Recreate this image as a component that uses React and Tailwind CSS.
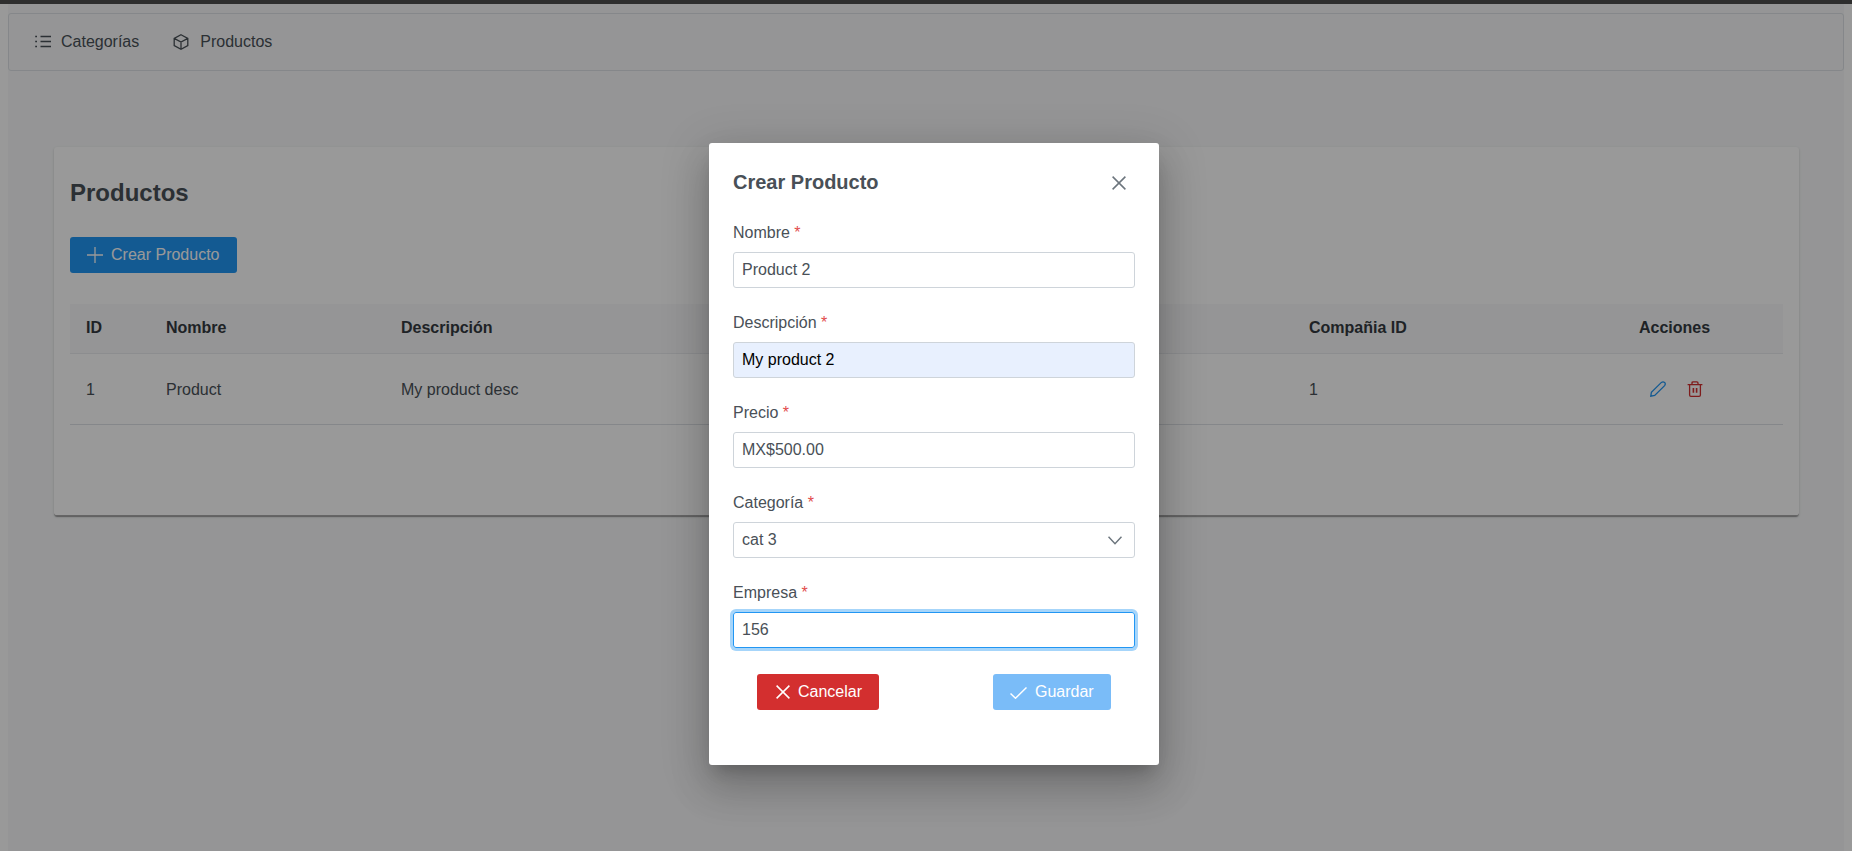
import React from 'react';

function Icon({ w = 16, h = 16, sw = 1.3, className = '', children }) {
  return (
    <svg
      width={w}
      height={h}
      viewBox={`0 0 ${w} ${h}`}
      fill="none"
      stroke="currentColor"
      strokeWidth={sw}
      className={`shrink-0 ${className}`}
    >
      {children}
    </svg>
  );
}

const CrossIcon = ({ size = 14, className = '' }) => (
  <Icon w={size} h={size} sw={1.5} className={className}>
    <path d={`M0.6 0.6L${size - 0.6} ${size - 0.6}M${size - 0.6} 0.6L0.6 ${size - 0.6}`} />
  </Icon>
);

function Field({ label, children }) {
  return (
    <div className="mb-[18px]">
      <label className="block h-[36px] pt-[8px] leading-[18px] text-[#495057]">
        {label} <span className="text-[#e24c4c]">*</span>
      </label>
      {children}
    </div>
  );
}

function TextBox({ value, className = '' }) {
  return (
    <div className={`h-[36px] rounded-[3px] border px-[8px] leading-[34px] ${className}`}>
      {value}
    </div>
  );
}

export default function App() {
  return (
    <div className="relative h-[851px] overflow-hidden bg-white font-['Liberation_Sans',sans-serif] text-[16px] text-[#495057]">
      <div className="h-[4px] bg-[#4d4d4d]" />

      <div className="mx-[8px] h-[847px] bg-[#f8f9fa] pt-[9px]">
        <div className="flex h-[58px] items-center rounded-[3px] border border-[#dee2e6] bg-[#f8f9fa] pl-[26px]">
          <div className="flex items-center gap-[10px]">
            <Icon>
              <path d="M5.5 2.5H16M5.5 7.5H16M5.5 12.5H16M0.2 2.5H2M0.2 7.5H2M0.2 12.5H2" />
            </Icon>
            <span>Categorías</span>
          </div>
          <div className="ml-[34px] flex items-center gap-[11px]">
            <Icon>
              <path d="M8 0.8L14.8 4.4V11.6L8 15.2L1.2 11.6V4.4ZM1.2 4.4L8 8L14.8 4.4M8 8V15.2" />
            </Icon>
            <span>Productos</span>
          </div>
        </div>

        <div className="ml-[46px] mr-[45px] mt-[76px] h-[369px] rounded-[3px] border-b border-[#a8a8a8] bg-white px-[16px] pt-[32px] shadow-[0_2px_1px_-1px_rgba(0,0,0,.2),0_1px_1px_0_rgba(0,0,0,.14),0_1px_3px_0_rgba(0,0,0,.12)]">
          <h1 className="h-[28px] text-[24px] font-bold leading-[28px] text-[#495057]">Productos</h1>
          <button className="mt-[30px] flex h-[36px] w-[167px] items-center gap-[8px] rounded-[3px] bg-[#2196f3] pl-[17px] text-white">
            <Icon>
              <path d="M8 0V16M0 8H16" />
            </Icon>
            Crear Producto
          </button>

          <table className="mt-[31px] w-full table-fixed border-collapse text-left">
            <colgroup>
              <col className="w-[80px]" />
              <col className="w-[235px]" />
              <col className="w-[908px]" />
              <col className="w-[330px]" />
              <col />
            </colgroup>
            <thead>
              <tr className="h-[49px] border-b border-[#e9ecef] bg-[#f8f9fa] text-[#343a40]">
                <th className="pl-[16px] font-bold">ID</th>
                <th className="pl-[16px] font-bold">Nombre</th>
                <th className="pl-[16px] font-bold">Descripción</th>
                <th className="pl-[16px] font-bold">Compañia ID</th>
                <th className="pl-[16px] font-bold">Acciones</th>
              </tr>
            </thead>
            <tbody>
              <tr className="h-[71px] border-b border-[#dee2e6]">
                <td className="pl-[16px] pt-[2px]">1</td>
                <td className="pl-[16px] pt-[2px]">Product</td>
                <td className="pl-[16px] pt-[2px]">My product desc</td>
                <td className="pl-[16px] pt-[2px]">1</td>
                <td className="pl-[27px] pt-[1px]">
                  <div className="flex items-center gap-[21px]">
                    <Icon className="text-[#2196f3]">
                      <path d="M0.8 15.2L1.4 11.2L11.4 1.4Q13 0.2 14.6 1.4Q15.9 3 14.6 4.6L4.7 14.4Z" />
                    </Icon>
                    <Icon className="text-[#d32f2f]">
                      <path d="M0.6 3.6H15.4M2.6 3.6V14Q2.6 15.3 3.9 15.3H12.1Q13.4 15.3 13.4 14V3.6M5 3.6V1.9Q5 0.8 6.1 0.8H9.9Q11 0.8 11 1.9V3.6" />
                      <path d="M6.4 7V11.8M9.6 7V11.8" strokeWidth="1.6" />
                    </Icon>
                  </div>
                </td>
              </tr>
            </tbody>
          </table>
        </div>
      </div>

      <div className="absolute inset-0 bg-black/40" />

      <div className="absolute left-[709px] top-[143px] h-[622px] w-[450px] rounded-[3px] bg-white px-[24px] shadow-[0_11px_15px_-7px_rgba(0,0,0,.2),0_24px_38px_3px_rgba(0,0,0,.14),0_9px_46px_8px_rgba(0,0,0,.12)]">
        <div className="flex h-[73px] items-start justify-between pt-[28px]">
          <h2 className="text-[20px] font-bold leading-[23px] text-[#495057]">Crear Producto</h2>
          <CrossIcon className="mr-[9px] mt-[5px] text-[#6c757d]" />
        </div>

        <Field label="Nombre">
          <TextBox value="Product 2" className="border-[#ced4da]" />
        </Field>
        <Field label="Descripción">
          <TextBox value="My product 2" className="border-[#ced4da] bg-[#e8f0fe] text-black" />
        </Field>
        <Field label="Precio">
          <TextBox value="MX$500.00" className="border-[#ced4da]" />
        </Field>
        <Field label="Categoría">
          <div className="flex h-[36px] items-center justify-between rounded-[3px] border border-[#ced4da] pl-[8px] pr-[12px]">
            <span>cat 3</span>
            <Icon w={14} h={9} sw={1.5} className="text-[#6c757d]">
              <path d="M0.5 0.7L7 7.7L13.5 0.7" />
            </Icon>
          </div>
        </Field>
        <Field label="Empresa">
          <TextBox value="156" className="border-[#2196f3] shadow-[0_0_0_3px_#a6d5fa]" />
        </Field>

        <div className="mt-[26px] flex justify-between px-[24px]">
          <button className="flex h-[36px] w-[122px] items-center gap-[8px] rounded-[3px] bg-[#d32f2f] pl-[19px] text-white">
            <CrossIcon />
            Cancelar
          </button>
          <button className="flex h-[36px] w-[118px] items-center gap-[8px] rounded-[3px] bg-[#7abcf8] pl-[17px] text-white">
            <Icon w={17} h={12} sw={1.5} className="mt-[2px]">
              <path d="M0.5 6.5L5.5 11.2L16.5 0.5" />
            </Icon>
            Guardar
          </button>
        </div>
      </div>
    </div>
  );
}
